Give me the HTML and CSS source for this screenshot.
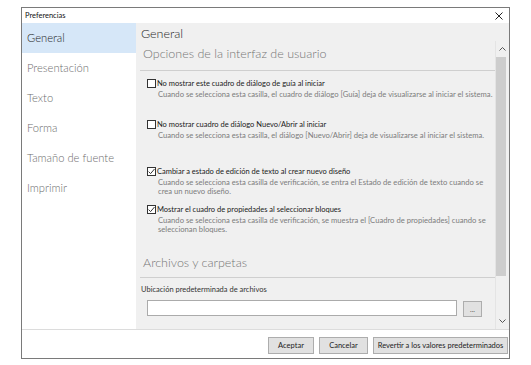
FILE: index.html
```html
<!DOCTYPE html>
<html lang="es">

<head>
    <meta charset="UTF-8">
    <title>Preferencias</title>
    <link rel="stylesheet" href="styles.css">
</head>

<body>
    <div class="window">
        <!-- title bar -->
        <div class="titlebar">
            <span class="title">Preferencias</span>
            <svg class="close" width="8" height="8" viewBox="0 0 8 8">
                <path d="M0.5 0.5 L7.5 7.5 M7.5 0.5 L0.5 7.5" stroke="#222" stroke-width="1" fill="none" />
            </svg>
        </div>

        <div class="main">
            <ul class="sidebar">
                <li class="nav-item active">General</li>
                <li class="nav-item">Presentación</li>
                <li class="nav-item">Texto</li>
                <li class="nav-item">Forma</li>
                <li class="nav-item">Tamaño de fuente</li>
                <li class="nav-item">Imprimir</li>
            </ul>

            <div class="content">
                <h1 class="page-title">General</h1>
                <div class="scroll-area">
                    <div class="panel">
                        <h2 class="section-title">Opciones de la interfaz de usuario</h2>

                        <div class="option first">
                            <div class="option-label"><span class="check"></span>No mostrar este cuadro de diálogo de guía al iniciar</div>
                            <p class="option-desc">Cuando se selecciona esta casilla, el cuadro de diálogo [Guía] deja de visualizarse al iniciar el sistema.</p>
                        </div>

                        <div class="option second">
                            <div class="option-label"><span class="check"></span>No mostrar cuadro de diálogo Nuevo/Abrir al iniciar</div>
                            <p class="option-desc">Cuando se selecciona esta casilla, el diálogo [Nuevo/Abrir] deja de visualizarse al iniciar el sistema.</p>
                        </div>

                        <div class="option third">
                            <div class="option-label"><span class="check checked"><svg width="7" height="7" viewBox="0 0 7 7"><path d="M0.6 3.6 L2.6 5.6 L6.5 1" stroke="#333" stroke-width="1" fill="none" /></svg></span>Cambiar a estado de edición de texto al crear nuevo diseño</div>
                            <p class="option-desc">Cuando se selecciona esta casilla de verificación, se entra el Estado de edición de texto cuando se crea un nuevo diseño.</p>
                        </div>

                        <div class="option fourth">
                            <div class="option-label"><span class="check checked"><svg width="7" height="7" viewBox="0 0 7 7"><path d="M0.6 3.6 L2.6 5.6 L6.5 1" stroke="#333" stroke-width="1" fill="none" /></svg></span>Mostrar el cuadro de propiedades al seleccionar bloques</div>
                            <p class="option-desc">Cuando se selecciona esta casilla de verificación, se muestra el [Cuadro de propiedades] cuando se seleccionan bloques.</p>
                        </div>

                        <h2 class="section-title files">Archivos y carpetas</h2>
                        <div class="field-label">Ubicación predeterminada de archivos</div>
                        <div class="field-row">
                            <input class="path-input" type="text">
                            <button class="browse">...</button>
                        </div>
                    </div>

                    <!-- scrollbar -->
                    <div class="scrollbar">
                        <div class="arrow">
                            <svg width="7" height="4" viewBox="0 0 7 4"><path d="M0.5 3.5 L3.5 0.5 L6.5 3.5" stroke="#555" stroke-width="1" fill="none" /></svg>
                        </div>
                        <div class="track">
                            <div class="thumb"></div>
                        </div>
                        <div class="arrow">
                            <svg width="7" height="4" viewBox="0 0 7 4"><path d="M0.5 0.5 L3.5 3.5 L6.5 0.5" stroke="#555" stroke-width="1" fill="none" /></svg>
                        </div>
                    </div>
                </div>
            </div>
        </div>

        <div class="footer">
            <button class="btn accept">Aceptar</button>
            <button class="btn cancel">Cancelar</button>
            <button class="btn revert">Revertir a los valores predeterminados</button>
        </div>
    </div>
</body>

</html>
```

FILE: styles.css
```css
* {
    margin: 0;
    padding: 0;
    box-sizing: border-box;
}

body {
    background: #fff;
    font-family: "Lato", "Liberation Sans", sans-serif;
    color: #222;
}

.window {
    margin: 7px 0 0 21px;
    width: 489px;
    height: 352px;
    border: 1px solid #7a7a7a;
    display: flex;
    flex-direction: column;
}

.titlebar {
    height: 15px;
    display: flex;
    align-items: center;
    justify-content: space-between;
    padding: 0 6px 0 3px;
    background: #fff;
}

.title {
    font-size: 7.5px;
    color: #111;
}

.main {
    height: 306px;
    display: flex;
}

.sidebar {
    width: 114px;
    list-style: none;
    background: #fff;
}

.nav-item {
    height: 30px;
    line-height: 30px;
    padding-left: 5px;
    font-size: 11.2px;
    font-weight: 300;
    color: #6e6e6e;
}

.nav-item.active {
    background: #d6e7f8;
    color: #222;
}

.content {
    flex: 1;
    display: flex;
    flex-direction: column;
    background: #f0f0f0;
}

.page-title {
    height: 18px;
    padding: 3px 0 0 5px;
    font-size: 12.5px;
    font-weight: 300;
    line-height: 16px;
    color: #1e1e1e;
}

.scroll-area {
    flex: 1;
    display: flex;
}

.panel {
    flex: 1;
    padding: 5px 0 0 4px;
}

.section-title {
    font-size: 12.5px;
    font-weight: 300;
    line-height: 16px;
    color: #767676;
    padding: 0 0 8px 3px;
    border-bottom: 1px solid #cfcfcf;
}

.option {
    padding-left: 7px;
}

.option.first {
    margin-top: 7px;
}

.option.second {
    margin-top: 20px;
}

.option.third {
    margin-top: 26px;
}

.option.fourth {
    margin-top: 8px;
}

.option-label {
    display: flex;
    align-items: center;
    height: 11px;
    font-size: 7.5px;
    color: #1a1a1a;
}

.check {
    width: 9px;
    height: 9px;
    border: 1px solid #333;
    background: #fff;
    margin-right: 1px;
    display: flex;
    align-items: center;
    justify-content: center;
    flex-shrink: 0;
}

.option-desc {
    padding: 1px 0 0 11px;
    width: 348px;
    font-size: 7.65px;
    line-height: 9px;
    color: #7c7c7c;
}

.section-title.files {
    margin-top: 21px;
    padding-bottom: 6px;
}

.field-label {
    margin-top: 6px;
    padding-left: 1px;
    height: 11px;
    line-height: 11px;
    font-size: 7.5px;
    color: #333;
}

.field-row {
    display: flex;
    align-items: flex-start;
    gap: 6px;
    margin-top: 5px;
    padding-left: 7px;
}

.path-input {
    width: 310px;
    height: 16px;
    border: 1px solid #ababab;
    background: #fff;
    outline: none;
}

.browse {
    width: 19px;
    height: 16px;
    margin-top: 1px;
    border: 1px solid #adadad;
    background: #e1e1e1;
    font-family: inherit;
    font-size: 7px;
    color: #555;
    line-height: 10px;
}

.scrollbar {
    width: 14px;
    display: flex;
    flex-direction: column;
    border-left: 1px solid #e4e4e4;
}

.arrow {
    height: 16px;
    display: flex;
    align-items: center;
    justify-content: center;
}

.track {
    flex: 1;
    padding: 0 2px 0 0;
}

.thumb {
    height: 219px;
    width: 10px;
    background: #cdcdcd;
}

.footer {
    height: 29px;
    border-top: 1px solid #dcdcdc;
    background: #fff;
    display: flex;
    justify-content: flex-end;
    align-items: flex-start;
    gap: 5px;
    padding: 7px 1px 0 0;
}

.btn {
    height: 17px;
    border: 1px solid #adadad;
    background: #e1e1e1;
    font-family: inherit;
    font-size: 7.5px;
    color: #222;
}

.accept {
    width: 46px;
}

.cancel {
    width: 49px;
}

.revert {
    width: 135px;
}
```
